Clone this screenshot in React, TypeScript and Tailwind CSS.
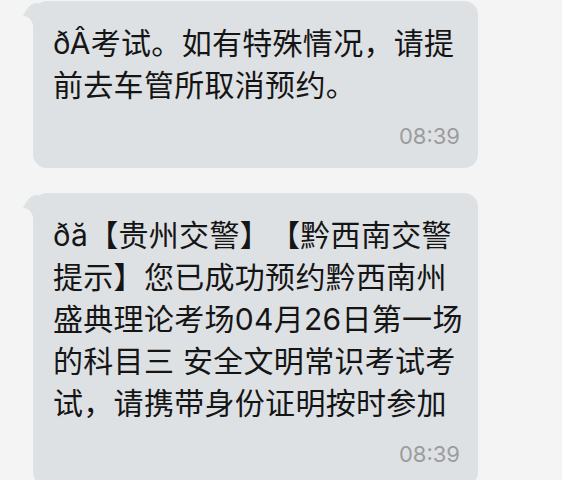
import React from 'react';

const FONT = { fontFamily: 'Inter, "Noto Sans CJK SC", sans-serif' };

function Tail() {
  return (
    <svg
      className="absolute left-[-11px] top-[2px]"
      width="16"
      height="24"
      viewBox="0 0 16 24"
    >
      <path d="M16 0 L13 0 Q6 2 1 13 Q8 12 12 24 L16 24 Z" fill="#dee1e4" />
    </svg>
  );
}

function Bubble({ lines, time }: { lines: string[]; time: string }) {
  return (
    <div className="relative w-[445px] rounded-[14px] bg-[#dee1e4] pl-5 pr-[18px] pt-[21px] pb-[19px]">
      <Tail />
      <div className="text-[30px] leading-[42px] tracking-[0.3px] text-[#151515] whitespace-nowrap [text-spacing-trim:space-all]">
        {lines.map((l, i) => (
          <div key={i}>{l}</div>
        ))}
      </div>
      <div className="mt-[17px] text-right text-[22px] leading-[26px] text-[#9a9c9e]">{time}</div>
    </div>
  );
}

export default function App() {
  return (
    <div className="min-h-[480px] w-[562px] overflow-hidden bg-[#f4f4f4] pl-[33px] pt-px" style={FONT}>
      <Bubble
        lines={['ðÂ考试。如有特殊情况，请提', '前去车管所取消预约。']}
        time="08:39"
      />
      <div className="mt-[25px]">
        <Bubble
          lines={[
            'ðă【贵州交警】【黔西南交警',
            '提示】您已成功预约黔西南州',
            '盛典理论考场04月26日第一场',
            '的科目三 安全文明常识考试考',
            '试，请携带身份证明按时参加',
          ]}
          time="08:39"
        />
      </div>
    </div>
  );
}
